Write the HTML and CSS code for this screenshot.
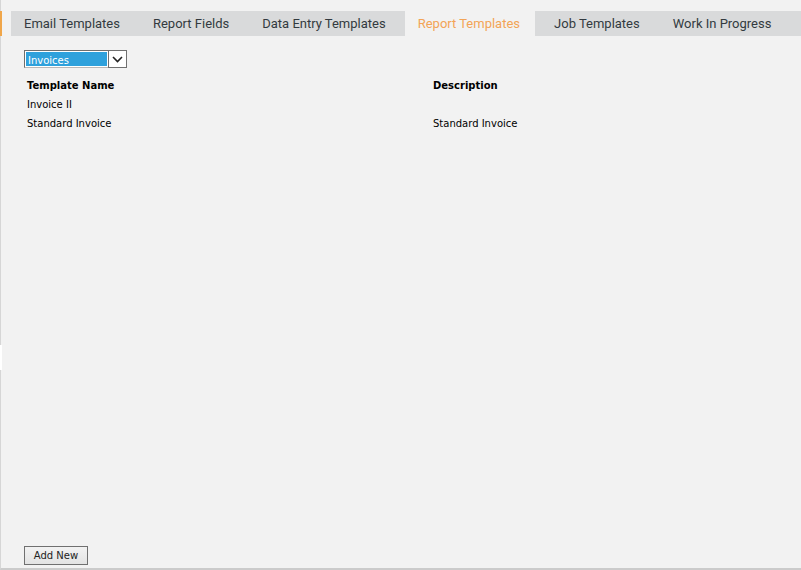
FILE: index.html
```html
<!DOCTYPE html>
<html lang="en">

<head>
    <meta charset="UTF-8">
    <title>Report Templates</title>
    <link rel="stylesheet" href="styles.css">
</head>

<body>
    <div class="page">
        <div class="tabRow">
            <ul class="tabs">
                <li class="tab">Email Templates</li>
                <li class="tab">Report Fields</li>
                <li class="tab">Data Entry Templates</li>
                <li class="tab tabActive">Report Templates</li>
                <li class="tab">Job Templates</li>
                <li class="tab">Work In Progress</li>
            </ul>
        </div>
        <div class="content">
            <div class="select">
                <span class="selectValue">Invoices</span>
                <span class="selectArrow">
                    <svg width="11" height="7" viewBox="0 0 11 7">
                        <path d="M1 1 L5.5 5.5 L10 1" fill="none" stroke="#222" stroke-width="1.6" />
                    </svg>
                </span>
            </div>
            <table class="grid">
                <tr>
                    <th>Template Name</th>
                    <th>Description</th>
                </tr>
                <tr>
                    <td>Invoice II</td>
                    <td></td>
                </tr>
                <tr>
                    <td>Standard Invoice</td>
                    <td>Standard Invoice</td>
                </tr>
            </table>
            <div class="footer">
                <button class="btn">Add New</button>
            </div>
        </div>
        <div class="edgeGap"></div>
    </div>
</body>

</html>
```

FILE: styles.css
```css
* {
    margin: 0;
    padding: 0;
    list-style: none;
    box-sizing: border-box;
}

body {
    background: #f2f2f2;
    font-family: "DejaVu Sans", Tahoma, sans-serif;
    font-size: 10px;
    color: #000;
}

.page {
    height: 570px;
    display: flex;
    flex-direction: column;
    padding-top: 11px;
    border-left: 1px solid #d6d6d6;
    border-bottom: 2px solid #cbcbcb;
    position: relative;
}

/* white notch on the left frame edge */
.edgeGap {
    position: absolute;
    left: -1px;
    top: 345px;
    width: 2px;
    height: 25px;
    background: #fff;
}

.tabRow {
    border-left: 2px solid #f0a64a;
    margin-left: -1px;
    padding-left: 9px;
}

.tabs {
    display: flex;
    gap: 5px;
    height: 25px;
    background: #d9dadb;
    font-family: Roboto, "Liberation Sans", sans-serif;
    font-size: 13px;
    color: #333a40;
}

.tab {
    padding: 0 14px;
    line-height: 25px;
    white-space: nowrap;
}

.tab:first-child {
    padding-left: 13px;
}

.tabActive {
    background: #f2f2f2;
    color: #f3a456;
    padding: 0 15px 0 13px;
}

.content {
    flex: 1;
    display: flex;
    flex-direction: column;
    padding: 14px 0 0 23px;
}

.select {
    width: 103px;
    height: 18px;
    display: flex;
    padding: 1px;
    border: 1px solid #6e6e6e;
    border-right-color: #b8b8b8;
    border-bottom-color: #b8b8b8;
    background: #fff;
}

.selectValue {
    flex: 1;
    background: #2ea1dc;
    color: #fff;
    line-height: 15px;
    padding: 1px 0 0 2px;
}

.selectArrow {
    width: 19px;
    margin: -2px -2px -2px 1px;
    border: 1px solid #707070;
    display: flex;
    align-items: center;
    justify-content: center;
    background: #fff;
}

.grid {
    margin-top: 8px;
    border-collapse: collapse;
    width: 600px;
}

.grid th,
.grid td {
    text-align: left;
    padding: 0 0 0 3px;
    height: 19px;
    font-weight: normal;
}

.grid th {
    font-weight: bold;
}

.grid th:first-child,
.grid td:first-child {
    width: 406px;
}

.footer {
    margin-top: auto;
    padding-bottom: 3px;
}

.btn {
    width: 64px;
    height: 19px;
    border: 1px solid #707070;
    background: linear-gradient(#f2f2f2, #e3e3e3);
    font-family: "DejaVu Sans", Tahoma, sans-serif;
    font-size: 10px;
    color: #222;
}
```
